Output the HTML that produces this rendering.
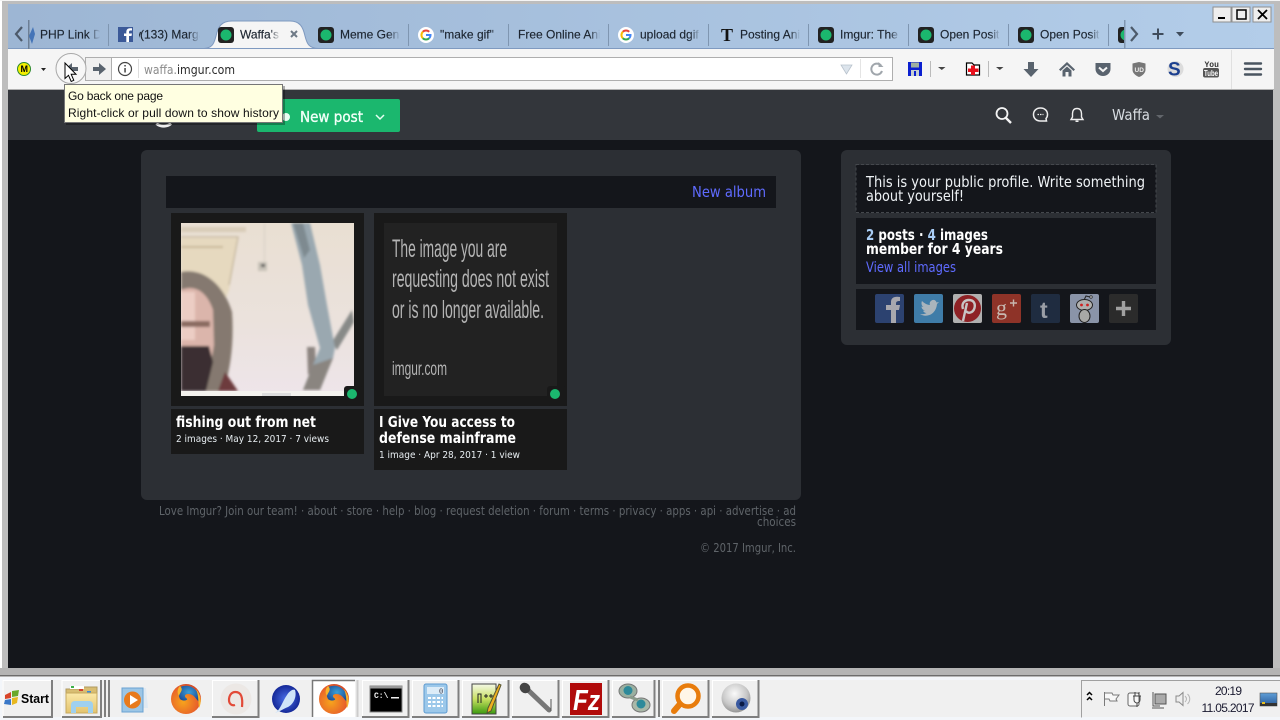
<!DOCTYPE html>
<html><head><meta charset="utf-8"><title>Waffa's albums</title>
<style>
html,body{margin:0;padding:0;background:#14161b;width:1280px;height:720px;overflow:hidden}
svg{display:block}
.t{font:12px "Liberation Sans",sans-serif;fill:#1c2530;stroke:#1c2530;stroke-width:.15}
.o{font-family:"DejaVu Sans",sans-serif}
.f{font:12px "DejaVu Sans",sans-serif;fill:#5f6469}
.up{fill:none;stroke:#fff;stroke-width:1}
.dn{fill:none;stroke:#7f7f7f;stroke-width:2}
.sep{stroke:#7f96b1;stroke-width:1}
.ic{fill:#59636e}
</style></head><body>
<svg width="1280" height="720" viewBox="0 0 1280 720" xmlns="http://www.w3.org/2000/svg">
<defs>
<linearGradient id="tb" x1="0" x2="1" y1="0" y2="0"><stop offset="0" stop-color="#9db6d4"/><stop offset="1" stop-color="#b3cde9"/></linearGradient>
<linearGradient id="fd" x1="0" x2="1" y1="0" y2="0"><stop offset="0" stop-color="#fff"/><stop offset="1" stop-color="#000"/></linearGradient>
<linearGradient id="wall" x1="0" x2="0" y1="0" y2="1"><stop offset="0" stop-color="#e9dfd2"/><stop offset=".6" stop-color="#ebe2dd"/><stop offset="1" stop-color="#eee5ea"/></linearGradient>
<radialGradient id="ffo" cx=".4" cy=".6" r=".7"><stop offset="0" stop-color="#f7a41c"/><stop offset=".7" stop-color="#e8622a"/><stop offset="1" stop-color="#c83c24"/></radialGradient>
<radialGradient id="ffb" cx=".5" cy=".4" r=".6"><stop offset="0" stop-color="#3aa0d8"/><stop offset="1" stop-color="#1c4a94"/></radialGradient>
<radialGradient id="sm" cx=".5" cy=".5" r=".6"><stop offset="0" stop-color="#4a6fe8"/><stop offset="1" stop-color="#0a1a88"/></radialGradient>
<radialGradient id="cam" cx=".45" cy=".35" r=".7"><stop offset="0" stop-color="#fafafa"/><stop offset=".6" stop-color="#c8c8c8"/><stop offset="1" stop-color="#8a8a8a"/></radialGradient>
<linearGradient id="np" x1="0" x2="0" y1="0" y2="1"><stop offset="0" stop-color="#f4f8e8"/><stop offset=".5" stop-color="#c8e060"/><stop offset="1" stop-color="#3a9a10"/></linearGradient>
<linearGradient id="fold" x1="0" x2="0" y1="0" y2="1"><stop offset="0" stop-color="#fbe9a8"/><stop offset="1" stop-color="#e3c36e"/></linearGradient>
<linearGradient id="sky" x1="0" x2="0" y1="0" y2="1"><stop offset="0" stop-color="#5f9fd8"/><stop offset="1" stop-color="#2a5a98"/></linearGradient>
<filter id="soft" x="-5%" y="-5%" width="110%" height="110%"><feGaussianBlur stdDeviation="1.300"/></filter>
<mask id="fade" maskUnits="userSpaceOnUse" x="0" y="0" width="1280" height="60">
<rect width="1280" height="60" fill="#fff"/>
<rect x="88" y="20" width="12" height="30" fill="url(#fd)"/><rect x="100" y="20" width="39" height="30" fill="#000"/>
<rect x="188" y="20" width="12" height="30" fill="url(#fd)"/><rect x="200" y="20" width="39" height="30" fill="#000"/>
<rect x="270" y="20" width="10" height="30" fill="url(#fd)"/><rect x="280" y="20" width="59" height="30" fill="#000"/>
<rect x="388" y="20" width="12" height="30" fill="url(#fd)"/><rect x="400" y="20" width="39" height="30" fill="#000"/>
<rect x="490" y="20" width="10" height="30" fill="url(#fd)"/><rect x="500" y="20" width="17" height="30" fill="#000"/>
<rect x="590" y="20" width="10" height="30" fill="url(#fd)"/><rect x="600" y="20" width="39" height="30" fill="#000"/>
<rect x="690" y="20" width="10" height="30" fill="url(#fd)"/><rect x="700" y="20" width="39" height="30" fill="#000"/>
<rect x="790" y="20" width="10" height="30" fill="url(#fd)"/><rect x="800" y="20" width="39" height="30" fill="#000"/>
<rect x="890" y="20" width="10" height="30" fill="url(#fd)"/><rect x="900" y="20" width="39" height="30" fill="#000"/>
<rect x="990" y="20" width="10" height="30" fill="url(#fd)"/><rect x="1000" y="20" width="39" height="30" fill="#000"/>
<rect x="1090" y="20" width="10" height="30" fill="url(#fd)"/><rect x="1100" y="20" width="40" height="30" fill="#000"/>
</mask>
<clipPath id="ph"><rect x="181" y="223" width="173" height="173"/></clipPath>
<clipPath id="tabclip"><rect x="36" y="20" width="1088" height="28"/></clipPath>
<g id="imgfav"><rect x="-8" y="-8" width="16" height="16" rx="3" fill="#222"/><circle r="5.500" fill="#1bb76e"/></g>
<g id="gfav"><circle r="8" fill="#fff"/><g fill="none" stroke-width="2"><path d="M-3.200 -3.200A4.500 4.500 0 0 1 3.200 -3.200" stroke="#ea4335"/><path d="M-3.200 -3.200A4.500 4.500 0 0 0 -3.200 3.200" stroke="#fbbc05"/><path d="M-3.200 3.200A4.500 4.500 0 0 0 3.200 3.200" stroke="#34a853"/><path d="M3.200 3.200A4.500 4.500 0 0 0 4.500 0H0" stroke="#4285f4"/></g></g>
<g id="ffx"><circle r="15" fill="url(#ffo)"/><path d="M-6 -12A13.500 13.500 0 0 1 13 3C9 -1 8 -5 2 -5C-1 -5 -2 -3 0 -1C4 1 -3 3 -6 0C-8 -4 -8 -8 -6 -12Z" fill="url(#ffb)"/><path d="M-6 -13C-2 -9 -6 -7 -7 -3C-9 -6 -9 -10 -6 -13ZM10 -10C15 -4 16 3 13 9C12 3 13 -3 10 -10Z" fill="#f7b32b"/></g>
</defs>

<!-- window frame -->
<rect width="1280" height="720" fill="#fff"/>
<rect x="2" y="1" width="1278" height="675" fill="#bdbdbd"/>
<rect x="0" y="0" width="1280" height="1" fill="#f4f4f4"/>

<!-- tab bar -->
<rect x="8" y="4" width="1266" height="45" fill="url(#tb)"/>
<rect x="8" y="48" width="1266" height="1" fill="#7f9ac0"/>
<!-- toolbar -->
<rect x="8" y="49" width="1266" height="41" fill="#f5f5f5"/>
<rect x="8" y="89" width="1266" height="1" fill="#b0b0b0"/>

<!-- active tab -->
<path d="M204 48.500C212 48 214 44 216 36C218 27 221 21 232 21H290C300 21 303 27 305 36C307 44 309 48 318 48.500Z" fill="#f5f5f5" stroke="#7f9ac0" stroke-width="1"/>

<!-- tab separators -->
<g class="sep"><path d="M108.500 24V46M408.500 24V46M508.500 24V46M608.500 24V46M708.500 24V46M808.500 24V46M908.500 24V46M1008.500 24V46M1108.500 24V46"/></g>

<!-- scroll arrows -->
<path d="M22 27L16 34L22 41" fill="none" stroke="#4d5a6a" stroke-width="2.200"/>
<rect x="28" y="20" width="1.500" height="29" fill="#6d7f95"/>
<path d="M33 27L29 36L32 44L35 34Z" fill="#4474b8"/>
<path d="M1131 27L1137 34L1131 41" fill="none" stroke="#4d5a6a" stroke-width="2.200"/>
<rect x="1124" y="20" width="1.500" height="29" fill="#8096b0"/>
<path d="M1152.500 34H1163.500M1158 28.500V39.500" stroke="#3f4c5c" stroke-width="2" fill="none"/>
<path d="M1176 32H1184L1180 36.500Z" fill="#3f4c5c"/>

<!-- tab content -->
<g clip-path="url(#tabclip)">
<rect x="118" y="27" width="15" height="15" fill="#3b5998"/><path d="M129 42V36H131.500L132 33.500H129V32C129 31 129.500 30.500 130.500 30.500H132V28.300H130C127.500 28.300 126.300 29.700 126.300 32V33.500H124V36H126.300V42Z" fill="#fff"/>
<use href="#imgfav" x="226" y="35"/>
<use href="#imgfav" x="326" y="35"/>
<use href="#gfav" x="426" y="35"/>
<use href="#gfav" x="626" y="35"/>
<text x="721" y="41" style="font:bold 18px 'Liberation Serif',serif" fill="#111">T</text>
<use href="#imgfav" x="826" y="35"/>
<use href="#imgfav" x="926" y="35"/>
<use href="#imgfav" x="1026" y="35"/>
<use href="#imgfav" x="1126" y="35"/>
<g mask="url(#fade)">
<text class="t" x="40" y="38.500">PHP Link Directory</text>
<text class="t" x="140" y="38.500">(133) Margaret</text>
<text class="t" x="240" y="38.500">Waffa's albums</text>
<text class="t" x="340" y="38.500">Meme Generator</text>
<text class="t" x="440" y="38.500">"make gif"</text>
<text class="t" x="518" y="38.500">Free Online Animator</text>
<text class="t" x="640" y="38.500">upload dgif image</text>
<text class="t" x="740" y="38.500">Posting Animated</text>
<text class="t" x="840" y="38.500">Imgur: The magic</text>
<text class="t" x="940" y="38.500">Open Positions</text>
<text class="t" x="1040" y="38.500">Open Positions</text>
</g>
</g>
<path d="M291 31L297 37M297 31L291 37" stroke="#6f7a86" stroke-width="2" fill="none"/>

<!-- window buttons -->
<g>
<rect x="1213" y="7" width="18" height="15" fill="#eee" stroke="#8f8f8f"/><rect x="1218" y="17" width="7" height="2" fill="#000"/>
<rect x="1232" y="7" width="18" height="15" fill="#eee" stroke="#8f8f8f"/><rect x="1237" y="10" width="9" height="9" fill="none" stroke="#000" stroke-width="1.500"/>
<rect x="1253" y="7" width="18" height="15" fill="#eee" stroke="#8f8f8f"/><path d="M1258 10L1267 19M1267 10L1258 19" stroke="#000" stroke-width="1.800"/>
</g>

<!-- toolbar left -->
<circle cx="24" cy="69" r="6.500" fill="#f5ee00" stroke="#2d8a2d" stroke-width="1"/>
<text x="20.500" y="72" style="font:bold 9px 'Liberation Sans',sans-serif" fill="#000">M</text>
<path d="M41 68H46L43.500 71Z" fill="#222"/>

<!-- url bar -->
<rect x="111.500" y="57.500" width="781" height="23" fill="#fff" stroke="#aeaeae"/>
<rect x="85.500" y="57.500" width="26" height="23" fill="#f0f0f0" stroke="#aeaeae"/>
<path d="M93 67V71H99V75L106 69L99 63V67Z" fill="#59636e"/>
<circle cx="71" cy="68.500" r="15" fill="#f7f7f7" stroke="#a8a8a8" stroke-width="1"/>
<path d="M78 67V71H72V75L65 69L72 63V67Z" fill="#59636e"/>
<circle cx="125" cy="69" r="6.500" fill="none" stroke="#444" stroke-width="1.200"/>
<rect x="124.300" y="68" width="1.500" height="4.500" fill="#444"/><rect x="124.300" y="65" width="1.500" height="1.500" fill="#444"/>
<rect x="138" y="59" width="1" height="19" fill="#ddd"/>
<text x="144" y="74" style="font:12px 'DejaVu Sans',sans-serif" fill="#8a8a8a" textLength="33" lengthAdjust="spacingAndGlyphs">waffa.</text>
<text x="177" y="74" style="font:12px 'DejaVu Sans',sans-serif" fill="#2a2a2a" textLength="58" lengthAdjust="spacingAndGlyphs">imgur.com</text>
<path d="M841 65H852L846.500 74Z" fill="#dce4ec" stroke="#b8c2cc" stroke-width=".8"/>
<rect x="860" y="59" width="1" height="19" fill="#e4e4e4"/>
<path d="M881 65.500A5.500 5.500 0 1 0 882 71" fill="none" stroke="#a0a6ac" stroke-width="2"/><path d="M878.500 62V67H883.500Z" fill="#a0a6ac"/>

<!-- toolbar right -->
<rect x="908" y="62" width="14" height="14" fill="#0b1fd0"/><rect x="911" y="62.500" width="8" height="5" fill="#9fb0a0"/><rect x="911" y="70" width="8" height="6" fill="#c8d0d0"/><rect x="914" y="71" width="2" height="5" fill="#0b1fd0"/>
<rect x="930" y="61" width="1" height="16" fill="#bbb"/>
<path d="M938 67H945.500L941.800 70Z" fill="#444"/>
<path d="M966.500 63H972L974 65H979.500V75H966.500Z" fill="#fff" stroke="#000" stroke-width="1.200"/>
<path d="M971 65H975V68H978.500V71.500H975V74.500H971V71.500H968V68H971Z" fill="#e8101c" transform="translate(0 .5)"/>
<rect x="988" y="61" width="1" height="16" fill="#bbb"/>
<path d="M996 67H1003.500L999.800 70Z" fill="#444"/>
<path d="M1028 62H1034V69H1038.500L1031 77L1023.500 69H1028Z" class="ic"/>
<path d="M1067 62L1059 69.500L1060.500 71L1067 65L1073.500 71L1075 69.500Z" class="ic"/><path d="M1062.500 70.500L1067 66.500L1071.500 70.500V76.500H1068.500V72H1065.500V76.500H1062.500Z" class="ic"/>
<path d="M1095.500 63H1110.500V69C1110.500 73 1107 76 1103 76C1099 76 1095.500 73 1095.500 69Z" class="ic"/>
<path d="M1099 67.500L1103 71L1107 67.500" fill="none" stroke="#f5f5f5" stroke-width="2"/>
<path d="M1132.500 63.500L1139 62L1145.500 63.500V70C1145.500 73 1142 76 1139 77C1136 76 1132.500 73 1132.500 70Z" fill="#777"/>
<text x="1134.500" y="72" style="font:bold 6.500px 'Liberation Sans',sans-serif" fill="#eee">UD</text>
<circle cx="1175.500" cy="69" r="8" fill="#dcdcdc"/>
<text x="1168" y="75.500" style="font:bold 19px 'Liberation Sans',sans-serif" fill="#1b3f8f">S</text>
<text x="1204.500" y="67" style="font:bold 8px 'Liberation Mono',monospace" fill="#333">You</text>
<rect x="1203" y="68" width="16" height="9.500" rx="2" fill="#555"/>
<text x="1204" y="76" style="font:bold 8px 'Liberation Sans',sans-serif" fill="#fff" textLength="14" lengthAdjust="spacingAndGlyphs">Tube</text>
<rect x="1231" y="50" width="1" height="39" fill="#e0e0e0"/>
<path d="M1245 63.500H1261M1245 69H1261M1245 74.500H1261" stroke="#4a5560" stroke-width="2.400" fill="none" stroke-linecap="round"/>

<!-- page -->
<rect x="8" y="90" width="1265" height="578" fill="#14161b"/>
<rect x="8" y="90" width="1265" height="50" fill="#33363b"/>
<path d="M156.500 123.500C160 127 167 127 171 123.500" fill="none" stroke="#eee" stroke-width="3"/>
<rect x="257" y="99" width="143" height="33" rx="2" fill="#1bb76e"/>
<circle cx="286" cy="117" r="4" fill="#eafff3"/>
<text class="o" x="300" y="122" font-size="15" fill="#f1fff8" stroke="#f1fff8" stroke-width=".35" textLength="63" lengthAdjust="spacingAndGlyphs">New post</text>
<path d="M376 115L380 119L384 115" fill="none" stroke="#e6fff2" stroke-width="1.500"/>

<circle cx="1002" cy="113.500" r="5.500" fill="none" stroke="#f4f4f4" stroke-width="1.800"/><path d="M1006 118L1011 123" stroke="#f4f4f4" stroke-width="2.400"/>
<path d="M1040.500 108C1036 108 1033.500 111 1033.500 114.500C1033.500 118 1036 121 1040.500 121H1046.500L1046 118.500C1047 117.500 1047.500 116 1047.500 114.500C1047.500 111 1045 108 1040.500 108Z" fill="none" stroke="#eee" stroke-width="1.500"/>
<path d="M1037.500 114.500H1043.500" stroke="#eee" stroke-width="1.200" stroke-dasharray="1.500 1"/>
<path d="M1077 108.500C1074 108.500 1072.500 110.500 1072.500 113.500V117L1071 119.500H1083L1081.500 117V113.500C1081.500 110.500 1080 108.500 1077 108.500Z" fill="none" stroke="#eee" stroke-width="1.400"/>
<rect x="1075.500" y="120.500" width="3" height="1.500" fill="#eee"/>
<text class="o" x="1112" y="120" font-size="15" fill="#d8dde2" textLength="38" lengthAdjust="spacingAndGlyphs">Waffa</text>
<path d="M1156 115H1164L1160 118.500Z" fill="#62666b"/>

<!-- main panel -->
<rect x="141" y="150" width="660" height="350" rx="6" fill="#2c2f34"/>
<rect x="166" y="176" width="610" height="32" fill="#14161b"/>
<text class="o" x="692" y="197" font-size="15" fill="#5f6bff" textLength="74" lengthAdjust="spacingAndGlyphs">New album</text>

<!-- card 1 -->
<rect x="171" y="213" width="193" height="193" fill="#191919"/>
<g clip-path="url(#ph)">
<rect x="181" y="223" width="173" height="173" fill="url(#wall)"/>
<g filter="url(#soft)">
<path d="M181 238H238L229 290L225 300L181 275Z" fill="#e6d9bf"/>
<path d="M181 237H238L229 285" fill="none" stroke="#b8a98d"/>
<rect x="181" y="227" width="65" height="5" fill="#d8ccb8"/>
<rect x="181" y="246" width="42" height="2" fill="#c8b898"/>
<path d="M264.500 223V262" stroke="#d4ccc2"/>
<rect x="258" y="262" width="9" height="9" fill="#c8c2b8"/><rect x="261" y="264" width="4" height="3" fill="#555"/>
<path d="M352 310L354 322L337 350L332 342Z" fill="#888a88"/>
<path d="M307 347L315 347L316 368L308 375Z" fill="#8c8480"/>
<path d="M291 223H310L320 265L327 305L335 348L333 358L320 390H303L313 365L320 348L308 305L302 265Z" fill="#9aa8b0"/>
<path d="M313 365L333 358L320 390H303Z" fill="#8a8580"/>
<path d="M293 223H303L310 250L304 258Z" fill="#7e8a90"/>
<path d="M181 272C200 268 222 280 232 312C234 340 231 370 223 391H181Z" fill="#85796f"/>
<path d="M181 290C195 284 207 292 213 310L214 345L206 391H181Z" fill="#dbb5ab"/>
<path d="M181 292H195V340H181Z" fill="#eccdc4"/>
<path d="M181 321H210V327H181Z" fill="#8a6a60"/>
<path d="M181 346H209L213 362L206 391H181Z" fill="#3a2f30"/>
<path d="M225 372L238 391H218Z" fill="#6d3b3e"/>
</g>
<rect x="181" y="391" width="173" height="5" fill="#f4f2ee"/>
<rect x="262" y="393" width="29" height="3" fill="#ddd"/>
</g>
<rect x="344" y="386" width="20" height="20" rx="3" fill="#191919"/>
<circle cx="352" cy="394" r="5" fill="#1bb76e"/>
<rect x="171" y="409" width="193" height="45" fill="#191919"/>
<text class="o" x="176" y="427" font-size="15" font-weight="bold" fill="#fff" textLength="140" lengthAdjust="spacingAndGlyphs">fishing out from net</text>
<text class="o" x="176" y="442" font-size="10" fill="#e8eef2" textLength="153" lengthAdjust="spacingAndGlyphs">2 images · May 12, 2017 · 7 views</text>

<!-- card 2 -->
<rect x="374" y="213" width="193" height="193" fill="#191919"/>
<rect x="384" y="223" width="173" height="173" fill="#222"/>
<g style="font-family:'Liberation Sans',sans-serif" font-size="25" fill="#b4b4b4">
<text x="392" y="257" textLength="115" lengthAdjust="spacingAndGlyphs">The image you are</text>
<text x="392" y="287" textLength="157" lengthAdjust="spacingAndGlyphs">requesting does not exist</text>
<text x="392" y="318" textLength="152" lengthAdjust="spacingAndGlyphs">or is no longer available.</text>
<text x="392" y="375" font-size="19" textLength="55" lengthAdjust="spacingAndGlyphs">imgur.com</text>
</g>
<rect x="547" y="386" width="20" height="20" rx="3" fill="#191919"/>
<circle cx="555" cy="394" r="5" fill="#1bb76e"/>
<rect x="374" y="409" width="193" height="61" fill="#191919"/>
<text class="o" x="379" y="427" font-size="15" font-weight="bold" fill="#fff" textLength="136" lengthAdjust="spacingAndGlyphs">I Give You access to</text>
<text class="o" x="379" y="443" font-size="15" font-weight="bold" fill="#fff" textLength="137" lengthAdjust="spacingAndGlyphs">defense mainframe</text>
<text class="o" x="379" y="458" font-size="10" fill="#e8eef2" textLength="141" lengthAdjust="spacingAndGlyphs">1 image · Apr 28, 2017 · 1 view</text>

<!-- footer -->
<text class="f" x="159" y="515" textLength="637" lengthAdjust="spacingAndGlyphs">Love Imgur? Join our team! · about · store · help · blog · request deletion · forum · terms · privacy · apps · api · advertise · ad</text>
<text class="f" x="757" y="526" textLength="39" lengthAdjust="spacingAndGlyphs">choices</text>
<text class="f" x="700" y="552" textLength="96" lengthAdjust="spacingAndGlyphs">© 2017 Imgur, Inc.</text>

<!-- sidebar -->
<rect x="841" y="150" width="330" height="195" rx="6" fill="#2c2f34"/>
<rect x="856" y="165" width="300" height="48" fill="#14161b"/>
<rect x="856" y="164.500" width="300" height="48" fill="none" stroke="#45484d" stroke-dasharray="3 2"/>
<text class="o" x="866" y="187" font-size="15" fill="#eef2f5" textLength="279" lengthAdjust="spacingAndGlyphs">This is your public profile. Write something</text>
<text class="o" x="866" y="201" font-size="15" fill="#eef2f5" textLength="98" lengthAdjust="spacingAndGlyphs">about yourself!</text>
<rect x="856" y="218" width="300" height="66" fill="#14161b"/>
<text class="o" x="866" y="240" font-size="15" font-weight="bold" fill="#fff" textLength="122" lengthAdjust="spacingAndGlyphs"><tspan fill="#a9cdf5">2</tspan> posts · <tspan fill="#a9cdf5">4</tspan> images</text>
<text class="o" x="866" y="254" font-size="15" font-weight="bold" fill="#fff" textLength="137" lengthAdjust="spacingAndGlyphs">member for 4 years</text>
<text class="o" x="866" y="272" font-size="14" fill="#5f6bff" textLength="90" lengthAdjust="spacingAndGlyphs">View all images</text>
<rect x="856" y="289" width="300" height="41" fill="#14161b"/>
<rect x="875" y="294" width="29" height="29" rx="2" fill="#2c4270"/>
<path d="M891 323V310H886V305H891V302C891 298 894 296 900 297V301C896 301 896 302 896 305H900L899 310H896V323Z" fill="#a8a8ae"/>
<rect x="914" y="294" width="29" height="29" rx="2" fill="#3f7ca8"/>
<path d="M920 314C926 318 936 315 937 304L939 302L936.500 302.500C936 300 933 299 931 301C929.500 302 929.500 304 930 305C927 305 924 303 922 301C921 303 921.500 306 923.500 307L921.500 306.500C921.500 308.500 923 310 925 310.500L923 310.700C923.500 312 925 313 926.500 313C925 314 922.500 314.500 920 314Z" fill="#a9b4bc"/>
<rect x="953" y="294" width="29" height="29" rx="2" fill="#b0b0b0"/>
<circle cx="967.500" cy="308.500" r="13.500" fill="#8e2125"/>
<path d="M963 321L967 303M963 309C961 303 965 300 969 300C974 300 975.500 304 974.500 308C973 313 968 314 966 311" fill="none" stroke="#c8c4c4" stroke-width="2.400"/>
<rect x="992" y="294" width="29" height="29" rx="2" fill="#8e3328"/>
<text x="996" y="315" style="font:22px 'Liberation Serif',serif" fill="#c8b8b0">g</text>
<path d="M1010 303H1017M1013.500 299.500V306.500" stroke="#c8b8b0" stroke-width="1.400"/>
<rect x="1031" y="294" width="29" height="29" rx="2" fill="#1f2c40"/>
<text x="1040" y="318" style="font:bold 23px 'Liberation Sans',sans-serif" fill="#9a9ea6">t</text>
<rect x="1070" y="294" width="29" height="29" rx="2" fill="#8a94a8"/>
<ellipse cx="1084.500" cy="305" rx="8" ry="5.500" fill="#b0b0ae" stroke="#222"/>
<ellipse cx="1084.500" cy="316" rx="5.500" ry="6.500" fill="#a8a8a6" stroke="#222"/>
<circle cx="1081.500" cy="305" r="1.400" fill="#d02020"/><circle cx="1087.500" cy="305" r="1.400" fill="#d02020"/>
<path d="M1084.500 299L1086 296L1090 297" fill="none" stroke="#222"/><circle cx="1091" cy="297" r="1.300" fill="#aaa" stroke="#222" stroke-width=".6"/>
<rect x="1109" y="294" width="29" height="29" rx="2" fill="#2b2b2b"/>
<path d="M1116 308.500H1131M1123.500 301V316" stroke="#a0a0a0" stroke-width="3.400"/>

<!-- tooltip -->
<rect x="66" y="86" width="219" height="39" fill="#000" opacity=".3"/>
<rect x="64.500" y="84.500" width="218" height="38" fill="#ffffe1" stroke="#767676"/>
<text x="68" y="100" style="font:12px 'Liberation Sans',sans-serif" fill="#111" textLength="95" lengthAdjust="spacing">Go back one page</text>
<text x="68" y="117" style="font:12px 'Liberation Sans',sans-serif" fill="#111" textLength="211" lengthAdjust="spacing">Right-click or pull down to show history</text>

<!-- cursor -->
<path d="M65 63V78.500L68.500 75.300L71.200 81.500L73.800 80.300L71.200 74.300H76Z" fill="#fff" stroke="#000" stroke-width="1"/>

<!-- window bottom + taskbar -->
<rect x="0" y="668" width="1280" height="8" fill="#b4b4b4"/>
<rect x="0" y="675" width="1280" height="1.500" fill="#6c6c6c"/>
<rect x="0" y="677" width="1280" height="43" fill="#f3f6fa"/>
<rect x="2" y="680" width="1278" height="37" fill="#f0f0f0"/>

<!-- taskbar buttons -->
<path class="up" d="M3 717V680.500H52"/><path class="dn" d="M52 680V717H3"/>
<path class="up" d="M62 717V680.500H101"/><path class="dn" d="M101 680V717H62M105 680V717M109 680V717"/>
<path class="up" d="M212.500 717V680.500H258"/><path class="dn" d="M258.500 680V717H212"/>
<rect x="312" y="680" width="43" height="37" fill="#fff"/>
<path d="M312.500 717V680.500H355" fill="none" stroke="#777" stroke-width="1.500"/>
<path d="M357.500 680V717" stroke="#ccc" stroke-width="2"/>
<path class="up" d="M362.500 717V680.500H408"/><path class="dn" d="M408.500 680V717H362"/>
<path class="up" d="M412.500 717V680.500H458"/><path class="dn" d="M458.500 680V717H412"/>
<path class="up" d="M462.500 717V680.500H508"/><path class="dn" d="M508.500 680V717H462"/>
<path class="up" d="M512.500 717V680.500H558"/><path class="dn" d="M558.500 680V717H512"/>
<path class="up" d="M562.500 717V680.500H608"/><path class="dn" d="M608.500 680V717H562"/>
<path class="up" d="M612.500 717V680.500H654"/><path class="dn" d="M654.500 680V717H612M659 680V717"/>
<path class="up" d="M662.500 717V680.500H708"/><path class="dn" d="M708.500 680V717H662"/>
<path class="up" d="M712.500 717V680.500H758"/><path class="dn" d="M758.500 680V717H712"/>
<path d="M1081.500 717.500V680.500H1280" fill="none" stroke="#a0a0a0"/>

<!-- start -->
<path d="M5 695L11 692L11 698L5 699Z" fill="#d8452a"/><path d="M12 691L19 690L18 696L12 697Z" fill="#6aa82a"/><path d="M5 700L11 699L11 705L4 704Z" fill="#3a78c8"/><path d="M12 698L18 697L17 703L12 705Z" fill="#e8b820"/>
<text x="21" y="703" style="font:bold 13px 'Liberation Sans',sans-serif" fill="#000" textLength="28" lengthAdjust="spacingAndGlyphs">Start</text>

<!-- folder -->
<path d="M66 689H82L84 687H97V712H66Z" fill="#d8bd72" stroke="#b09a60"/>
<rect x="70" y="686" width="14" height="3" fill="#fff"/><rect x="71" y="686" width="3" height="2" fill="#3cb04a"/>
<rect x="79" y="689" width="4" height="2" fill="#d04030"/><rect x="87" y="691" width="4" height="2" fill="#3a8ad8"/>
<path d="M66 693H97V713H66Z" fill="url(#fold)" stroke="#c6a95e"/>
<path d="M71 713V705C71 702 73 701 75 701H89C91 701 93 702 93 705V713H88V707H76V713Z" fill="#9fd0ee"/>

<!-- media -->
<path d="M127 688H146L148 708H127Z" fill="#dfe9f2"/>
<rect x="122" y="688" width="21" height="24" fill="#9cc6e6" stroke="#6aa2d2"/>
<circle cx="132.500" cy="700" r="8.500" fill="#e87a1c"/><path d="M130 695L138 700L130 705Z" fill="#fff"/>

<!-- firefox -->
<use href="#ffx" x="186" y="699"/>
<circle cx="236" cy="699" r="15.500" fill="#ece8e5"/>
<path d="M242 707C243 697 241 692 235.500 692C231 692 229 696 229 700C229 704 232 706 235 705" fill="none" stroke="#e24a38" stroke-width="2.200"/>
<circle cx="286" cy="699" r="14" fill="url(#sm)"/>
<path d="M275 713C281 709 282 702 287 695C290 690 294 689 295 690C297 696 294 704 288 707C283 709 279 712 275 713Z" fill="#cfe4f8"/>
<use href="#ffx" x="334" y="699"/>

<!-- cmd -->
<rect x="370" y="686" width="32" height="26" fill="#000" stroke="#888"/>
<rect x="370" y="686" width="32" height="2.500" fill="#9a9a9a"/>
<text x="374" y="698" style="font:bold 8px 'Liberation Mono',monospace" fill="#eee">C:\</text>
<rect x="391" y="697" width="8" height="1.500" fill="#eee"/>

<!-- calc -->
<rect x="424" y="684" width="23" height="29" rx="2" fill="#9cc8ea" stroke="#5c9ad0"/>
<rect x="427" y="687" width="17" height="7" fill="#dcecf8"/>
<text x="439" y="693.500" style="font:7px 'Liberation Mono',monospace" fill="#334">0</text>
<path d="M428 698H443M428 702H443M428 706H443" stroke="#fff" stroke-width="2" stroke-dasharray="3 1.500"/>

<!-- notepad++ -->
<rect x="472" y="684" width="24" height="30" fill="url(#np)" stroke="#444"/>
<path d="M478 703V694H481V703M484 696H488M486 694V698M489 696H493M491 694V698" fill="none" stroke="#222"/>
<path d="M488 708L499 684L501 685L491 711L487 713Z" fill="#f0b020" stroke="#553"/>

<!-- mic -->
<path d="M528 690L549 710" stroke="#777" stroke-width="5" stroke-linecap="round"/>
<ellipse cx="525" cy="688" rx="5.500" ry="5" fill="#444" transform="rotate(40 525 688)"/>
<path d="M551 711V699" stroke="#555"/>

<!-- filezilla -->
<rect x="570" y="683" width="32" height="32" fill="#b10b0b"/>
<text x="573" y="710" style="font:italic bold 29px 'Liberation Sans',sans-serif" fill="#fff" textLength="27" lengthAdjust="spacingAndGlyphs">Fz</text>

<!-- binoculars -->
<ellipse cx="628" cy="691" rx="9" ry="7" fill="#9ab0a0" stroke="#777"/><circle cx="628" cy="690.500" r="4.500" fill="#2e8a9a"/>
<ellipse cx="641" cy="705" rx="9" ry="7" fill="#aab8a8" stroke="#777"/><circle cx="641" cy="704" r="4.500" fill="#2e8a9a"/>
<path d="M630 697L638 700" stroke="#8a9a8a" stroke-width="3"/>

<!-- search -->
<circle cx="688" cy="696" r="10.500" fill="#fff6e8" stroke="#e87c0c" stroke-width="4.500"/>
<path d="M680 704L674 711" stroke="#e87c0c" stroke-width="6" stroke-linecap="round"/>

<!-- webcam -->
<circle cx="736" cy="698" r="14.500" fill="url(#cam)"/>
<circle cx="742" cy="704" r="6" fill="#3a5aa0"/><circle cx="742" cy="704" r="2.500" fill="#0a1a44"/>

<!-- tray -->
<path d="M1087 695L1089.500 692.500L1092 695M1087 700L1089.500 697.500L1092 700" fill="none" stroke="#000" stroke-width="1.500"/>
<path d="M1104.500 692V706M1104.500 693H1112L1113 695H1119L1116 699L1117 701H1110L1109 699H1104.500" fill="#f8f8f8" stroke="#7a7a7a"/>
<rect x="1128" y="693" width="11" height="13" rx="2" fill="#f8f8f8" stroke="#666"/>
<path d="M1133 696H1141M1135 692V696M1139 692V696M1134 696V700C1134 702 1136 703 1137 703C1138 703 1140 702 1140 700V696M1137 703V707" fill="none" stroke="#444"/>
<rect x="1155" y="694" width="11" height="10" fill="#aaa" stroke="#555"/>
<path d="M1153 692V706H1160M1152 708H1164" fill="none" stroke="#555"/>
<path d="M1176 696H1179L1183 692.500V705.500L1179 702H1176Z" fill="#eee" stroke="#8a8a8a"/>
<path d="M1185 696C1187 698 1187 700 1185 702M1187.500 694C1190.500 697 1190.500 701 1187.500 704" fill="none" stroke="#b4b4b4"/>
<text x="1215" y="695" style="font:12px 'Liberation Sans',sans-serif" fill="#1a1a30" textLength="27" lengthAdjust="spacing">20:19</text>
<text x="1201.500" y="712" style="font:12px 'Liberation Sans',sans-serif" fill="#1a1a30" textLength="53" lengthAdjust="spacing">11.05.2017</text>
<rect x="1260" y="693" width="17" height="13" fill="url(#sky)" stroke="#555" stroke-width=".6"/>
<rect x="1260" y="703" width="17" height="3" fill="#333"/>
<rect x="1262" y="702" width="3" height="2" fill="#e8c020"/>

<!-- frame right edge overlay -->
<rect x="1274" y="4" width="6" height="664" fill="#bdbdbd"/>
<rect x="0" y="2" width="2" height="666" fill="#fff"/>
</svg>
</body></html>
